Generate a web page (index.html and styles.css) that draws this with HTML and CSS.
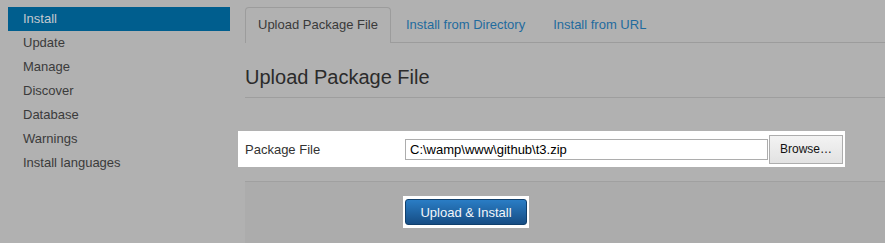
FILE: index.html
```html
<!DOCTYPE html>
<html lang="en">
<head>
    <meta charset="UTF-8">
    <title>Extensions: Install</title>
    <link rel="stylesheet" href="styles.css">
</head>
<body>
    <div class="page">
        <ul class="sidebar">
            <li class="active">Install</li>
            <li>Update</li>
            <li>Manage</li>
            <li>Discover</li>
            <li>Database</li>
            <li>Warnings</li>
            <li>Install languages</li>
        </ul>
        <div class="main">
            <ul class="tabs">
                <li class="active">Upload Package File</li>
                <li>Install from Directory</li>
                <li>Install from URL</li>
            </ul>
            <h3 class="legend">Upload Package File</h3>
            <div class="control-group">
                <label class="control-label">Package File</label>
                <div class="file-input">C:\wamp\www\github\t3.zip</div>
                <div class="browse">Browse…</div>
            </div>
            <div class="form-actions">
                <div class="highlight">
                    <button class="btn-primary">Upload &amp; Install</button>
                </div>
            </div>
        </div>
    </div>
</body>
</html>
```

FILE: styles.css
```css
body {
    margin: 0;
    background: #b1b1b1;
    font-family: "Liberation Sans", Arial, sans-serif;
    font-size: 13px;
    overflow: hidden;
}
.page {
    display: flex;
    height: 243px;
}
.sidebar {
    list-style: none;
    margin: 7px 0 0 8px;
    padding: 0;
    width: 222px;
    flex-shrink: 0;
}
.sidebar li {
    height: 24px;
    line-height: 24px;
    padding-left: 15px;
    color: #3b3b3b;
}
.sidebar li.active {
    background: #005e8e;
    color: #c4c9ce;
}
.main {
    flex: 1;
    margin-left: 15px;
    padding-top: 7px;
    display: flex;
    flex-direction: column;
}
.tabs {
    list-style: none;
    margin: 0;
    padding: 0;
    display: flex;
    border-bottom: 1px solid #9c9c9c;
}
.tabs li {
    height: 34px;
    line-height: 34px;
    padding: 0 12px;
    margin-right: 2px;
    margin-bottom: -1px;
    border: 1px solid transparent;
    border-bottom: 0;
    color: #1f6b9e;
}
.tabs li.active {
    border-color: #9c9c9c;
    border-radius: 4px 4px 0 0;
    background: #b1b1b1;
    color: #3a3a3a;
    height: 35px;
}
.legend {
    margin: 22px 0 0;
    padding-bottom: 8px;
    line-height: 24px;
    font-size: 20px;
    font-weight: normal;
    color: #2b2b2b;
    border-bottom: 1px solid #9e9e9e;
}
.control-group {
    margin: 33px 0 0 -7px;
    width: 607px;
    height: 36px;
    padding-left: 7px;
    box-sizing: border-box;
    background: #fff;
    display: flex;
    align-items: center;
}
.control-label {
    width: 160px;
    color: #333;
}
.file-input {
    width: 363px;
    height: 21px;
    box-sizing: border-box;
    border: 1px solid #adadad;
    padding-left: 4px;
    line-height: 19px;
    color: #000;
}
.browse {
    margin-left: 1px;
    width: 74px;
    height: 29px;
    box-sizing: border-box;
    border: 1px solid #adadad;
    background: linear-gradient(#f3f3f3, #e2e2e2);
    line-height: 27px;
    text-align: center;
    font-size: 12px;
    color: #111;
}
.form-actions {
    margin-top: 14px;
    flex: 1;
    border-top: 1px solid #a0a0a0;
    background: #acacac;
    padding: 14px 0 0 158px;
}
.highlight {
    display: inline-block;
    background: #fff;
    padding: 3px 2px;
}
.btn-primary {
    display: block;
    width: 122px;
    height: 26px;
    border: 1px solid #0f3f6c;
    border-radius: 3px;
    background: linear-gradient(#2a7dc5, #164d84);
    color: #f2f6fa;
    font-family: "Liberation Sans", Arial, sans-serif;
    font-size: 13px;
    padding: 0;
}
```
